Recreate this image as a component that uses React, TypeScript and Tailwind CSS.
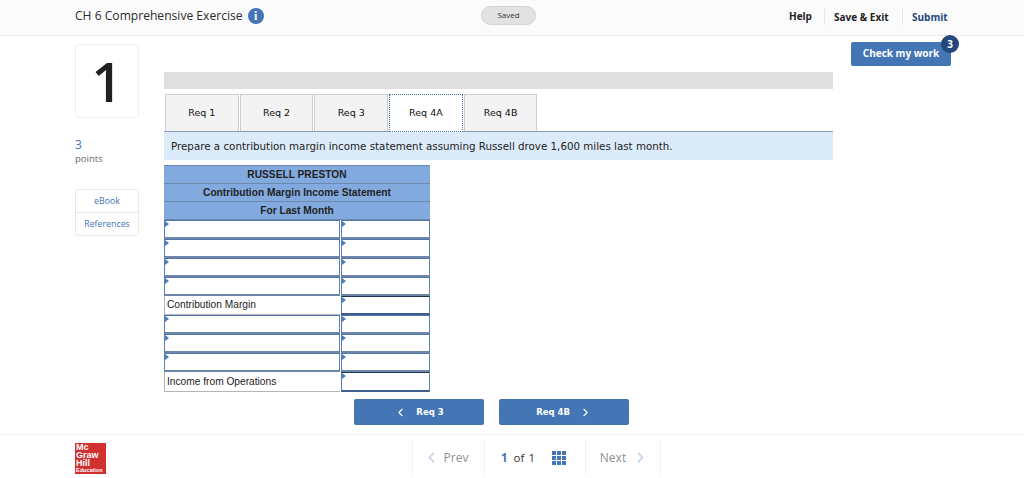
import React from 'react';
import { ChevronLeft, ChevronRight } from 'lucide-react';

const ui = "font-['Open_Sans','Noto_Sans',sans-serif]";
const verdana = "font-['DejaVu_Sans',sans-serif]";
const arial = "font-['Liberation_Sans',Arial,sans-serif]";

const tabs = ['Req 1', 'Req 2', 'Req 3', 'Req 4A', 'Req 4B'];

const Marker = () => (
  <span className="absolute left-0 top-0 w-0 h-0 border-y-[3px] border-y-transparent border-l-[4px] border-l-[#4a7ebb]" />
);

const InputRow = () => (
  <div className="flex h-[19px]">
    <div className="relative h-full w-[176px] border-x border-t border-b-2 border-x-[#5a7fb0] border-t-[#4f77ad] border-b-[#6f86a6] bg-white">
      <Marker />
    </div>
    <div className="relative h-full w-[89px] ml-px border-x border-t border-b-2 border-x-[#5a7fb0] border-t-[#4f77ad] border-b-[#6f86a6] bg-white">
      <Marker />
    </div>
  </div>
);

const LabelRow = ({ label, h }: { label: string; h: string }) => (
  <div className={`flex ${h}`}>
    <div className="w-[176px] border-l border-b border-[#b5b5b5] bg-white flex items-center pl-[2px] text-[10.2px] text-[#222]">{label}</div>
    <div className="w-[89px] ml-px h-full border-x border-t border-b-2 border-x-[#5a7fb0] border-t-[#1f3553] border-b-[#3f5f8c] bg-white relative">
      <Marker />
    </div>
  </div>
);

const HeaderRow = ({ text }: { text: string }) => (
  <div className="h-[18px] pt-px flex items-center justify-center bg-[#83aadf] border-b border-[#6d88ad] text-[10.2px] font-bold text-[#222]">
    {text}
  </div>
);

export default function App() {
  return (
    <div className={`w-[1024px] h-[478px] overflow-hidden bg-white flex flex-col ${ui}`}>
      {/* top bar */}
      <header className="h-[36px] shrink-0 bg-[#fbfbfb] border-b border-[#ececec] flex items-center pl-[75px] pb-[2px]">
        <div className="w-[406px] flex items-center gap-[5px] text-[12.1px] text-[#2b2b2b]">
          <span>CH 6 Comprehensive Exercise</span>
          <span className="w-4 h-4 rounded-full bg-[#4475b4] text-white text-[12px] font-bold flex items-center justify-center font-['Liberation_Serif',serif]">i</span>
        </div>
        <div className="w-[55px] h-[19px] mb-[3px] rounded-full bg-[#e2e2e2] border border-[#d4d4d4] text-[8px] text-[#333] flex items-center justify-center">Saved</div>
        <div className="ml-[241px] flex items-center text-[10px] font-bold text-[#222]">
          <span className="w-[47px] pl-[12px]">Help</span>
          <span className="h-[16px] w-[78px] border-l border-[#e6e6e6] pl-[9px] leading-[16px]">Save &amp; Exit</span>
          <span className="h-[16px] border-l border-[#e6e6e6] pl-[9px] leading-[16px] text-[#24477d]">Submit</span>
        </div>
      </header>

      <main className="flex-1 flex pl-[75px]">
        {/* left rail */}
        <aside className="w-[64px] shrink-0 pt-[8px]">
          <div className="w-[64px] h-[74px] border border-[#eeeeee] rounded-[4px] flex items-center justify-center text-[54px] font-semibold leading-none text-[#222]">1</div>
          <div className="mt-[20px] text-[12px] leading-[14px] text-[#4475b4]">3</div>
          <div className="text-[9.5px] leading-[13px] text-[#666]">points</div>
          <div className="mt-[24px] border border-[#e8e8e8] rounded-[3px] text-[8.8px] text-[#4475b4] text-center">
            <div className="h-[23px] leading-[23px] border-b border-[#e8e8e8]">eBook</div>
            <div className="h-[22px] leading-[23px]">References</div>
          </div>
        </aside>

        {/* question */}
        <section className="w-[669px] ml-[25px] shrink-0 pt-[36px]">
          <div className="h-[17px] bg-[#dfdfdf]" />
          <div className={`mt-[5px] h-[38px] flex pl-px gap-[1px] border-b border-[#8a9cb3] ${verdana}`}>
            {tabs.map((t) => (
              <div
                key={t}
                className={
                  t === 'Req 4A'
                    ? 'w-[73.7px] h-[38px] pt-px bg-white border border-dotted border-[#3f73b5] flex items-center justify-center text-[9.5px] text-[#111]'
                    : 'w-[73.7px] h-[37px] pt-px bg-[#f3f3f3] border border-b-0 border-[#cfcfcf] flex items-center justify-center text-[9.5px] text-[#111]'
                }
              >
                {t}
              </div>
            ))}
          </div>
          <div className={`h-[28px] pt-px bg-[#dcebf9] flex items-center pl-[7px] text-[10.3px] text-[#222] ${verdana}`}>
            Prepare a contribution margin income statement assuming Russell drove 1,600 miles last month.
          </div>

          <div className={`mt-[5px] w-[266px] border-t border-[#6d88ad] ${arial}`}>
            <HeaderRow text="RUSSELL PRESTON" />
            <HeaderRow text="Contribution Margin Income Statement" />
            <HeaderRow text="For Last Month" />
            <InputRow />
            <InputRow />
            <InputRow />
            <InputRow />
            <LabelRow label="Contribution Margin" h="h-[19px]" />
            <InputRow />
            <InputRow />
            <InputRow />
            <LabelRow label="Income from Operations" h="h-[20px]" />
          </div>

          <div className={`mt-[7px] ml-[190px] flex gap-[15px] text-[8.5px] font-bold text-white ${verdana}`}>
            <div className="w-[130px] h-[26px] bg-[#4475b4] rounded-[2px] flex items-center justify-center gap-[9px]">
              <ChevronLeft size={13} strokeWidth={2} />
              <span>Req 3</span>
            </div>
            <div className="w-[130px] h-[26px] bg-[#4475b4] rounded-[2px] flex items-center justify-center gap-[9px]">
              <span>Req 4B</span>
              <ChevronRight size={13} strokeWidth={2} />
            </div>
          </div>
        </section>

        {/* check my work */}
        <div className="ml-[18px] pt-[6px]">
          <div className="relative w-[100px] h-[24px] pb-px bg-[#4475b4] rounded-[2px] flex items-center justify-center text-[10px] font-bold text-white">
            Check my work
            <span className="absolute -right-[8px] -top-[7px] w-[18px] h-[18px] rounded-full bg-[#24477d] text-[10px] flex items-center justify-center">3</span>
          </div>
        </div>
      </main>

      {/* footer */}
      <footer className="h-[44px] shrink-0 border-t border-[#eeeeee] flex items-center pl-[75px]">
        <div className={`w-[31px] h-[31px] bg-[#d0312f] text-white font-bold text-[9px] leading-[8px] pl-[1px] mt-[4px] overflow-hidden ${arial}`}>
          <div>Mc</div>
          <div>Graw</div>
          <div>Hill</div>
          <div className="text-[5.5px] leading-[6px] whitespace-nowrap">Education</div>
        </div>
        <div className="ml-[306px] h-[34px] flex items-center text-[12px]">
          <div className="w-[73px] h-full pt-[2px] pr-[6px] border-x border-[#f0f0f0] flex items-center justify-center gap-[4px] text-[#8f8f8f]">
            <ChevronLeft size={17} strokeWidth={2.5} className="text-[#c9d8ec]" />
            <span>Prev</span>
          </div>
          <div className="w-[100px] h-full pt-[2px] flex items-center pl-[16px] text-[11.5px] text-[#333]">
            <span className="font-bold text-[#4475b4]">1</span>
            <span className="ml-[6px]">of</span>
            <span className="ml-[4px]">1</span>
            <svg width="14" height="14" viewBox="0 0 14 14" className="ml-[17px] fill-[#4475b4]">
              <rect x="0" y="0" width="4" height="4" />
              <rect x="5" y="0" width="4" height="4" />
              <rect x="10" y="0" width="4" height="4" />
              <rect x="0" y="5" width="4" height="4" />
              <rect x="5" y="5" width="4" height="4" />
              <rect x="10" y="5" width="4" height="4" />
              <rect x="0" y="10" width="4" height="4" />
              <rect x="5" y="10" width="4" height="4" />
              <rect x="10" y="10" width="4" height="4" />
            </svg>
          </div>
          <div className="w-[76px] h-full pt-[2px] pl-[3px] border-x border-[#f0f0f0] flex items-center justify-center gap-[6px] text-[#8f8f8f]">
            <span>Next</span>
            <ChevronRight size={17} strokeWidth={2.5} className="text-[#c9d8ec]" />
          </div>
        </div>
      </footer>
    </div>
  );
}
